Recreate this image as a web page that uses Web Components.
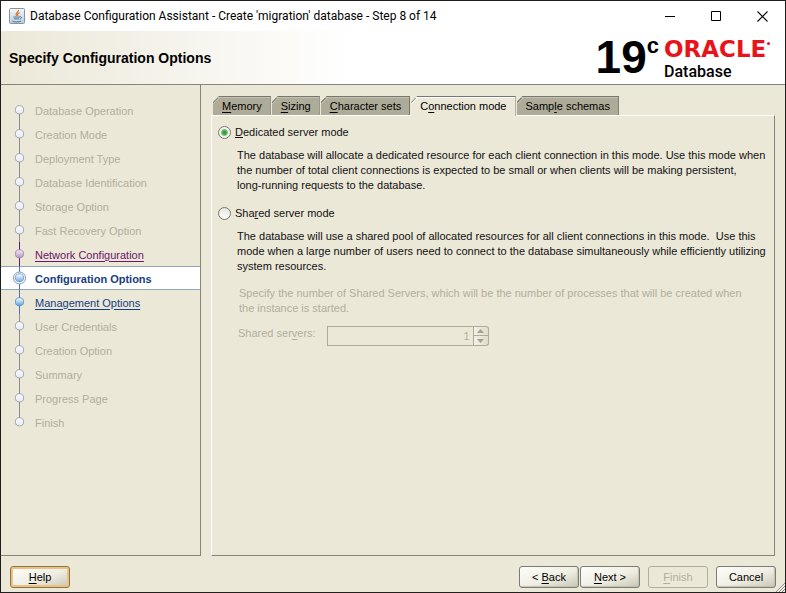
<!DOCTYPE html>
<html lang="en">
<head>
<meta charset="utf-8">
<title>Database Configuration Assistant</title>
<style>
  html, body { height: 100%; margin: 0; }
  body { font: 11px/15px "Liberation Sans", Arial, sans-serif; color: #111; background: #ebe8d8; }
</style>
</head>
<body>
<dbca-window></dbca-window>

<script>
const define = (name, html, setup) => {
  const template = document.createElement('template');
  template.innerHTML = html;
  customElements.define(name, class extends HTMLElement {
    constructor() {
      super();
      this.attachShadow({ mode: 'open' }).append(template.content.cloneNode(true));
    }
    connectedCallback() { if (setup) setup(this, this.shadowRoot); }
  });
};

define('title-bar', `
<style>
  :host { display: flex; align-items: center; height: 30px; padding-left: 8px; background: #fff; color: #000;
          font: 12px/16px Roboto, "Noto Sans", sans-serif; }
  .title { flex: 1; padding-left: 5px; white-space: nowrap; overflow: hidden; }
  button { width: 46px; height: 30px; padding: 0; border: 0; background: none; display: grid; place-items: center; }
  svg { display: block; }
</style>
<svg width="16" height="16" viewBox="0 0 16 16" aria-hidden="true">
  <defs><linearGradient id="j" x2="0" y2="1"><stop stop-color="#f5f8fa"/><stop offset="1" stop-color="#b9cbd8"/></linearGradient></defs>
  <rect x=".5" y=".5" width="15" height="15" rx="1" fill="url(#j)" stroke="#8295a3"/>
  <path d="M9.5 2C10 4 5.5 5 7.6 8M10.5 4.6C8.6 5.4 8 6.300 9 8" fill="none" stroke="#e0762b" stroke-width="1.200"/>
  <path d="M4.500 9h6.500M5 10.800h5M10.800 8.800c2.500-.5 2 1.800 0 2.400M3.500 13.200c2 .9 6.500.9 8.500 0" fill="none" stroke="#54789a"/>
</svg>
<div class="title"><slot></slot></div>
<button aria-label="Minimize"><svg width="11" height="11"><path d="M0 5.500h10" stroke="#000"/></svg></button>
<button aria-label="Maximize"><svg width="11" height="11"><path d="M.5.5h9v9h-9z" fill="none" stroke="#000"/></svg></button>
<button aria-label="Close"><svg width="11" height="11"><path d="M.5.5l10 10M10.500.5l-10 10" stroke="#000" stroke-width="1.100"/></svg></button>`);

define('page-banner', `
<style>
  :host { display: flex; align-items: center; justify-content: space-between; height: 53px; padding: 0 11px 0 8px;
          border-bottom: 1px solid #85847d; background: linear-gradient(90deg, #ebe8d8, #fff 45%); color: #000; }
  h1 { margin: 0; font: bold 14px/18px "Liberation Sans", Arial, sans-serif; }
  .brand { display: grid; grid-template-columns: auto auto 110px; align-items: start; }
  .ver { font: bold 46px/53px "Liberation Sans", Arial, sans-serif; }
  .sup { font: bold 22px/22px "Liberation Sans", Arial, sans-serif; padding: 4px 5px 0 0; }
  .name { display: grid; padding-top: 4px; }
  .oracle { display: flex; align-items: center; font: bold 23px/28px "DejaVu Sans", sans-serif; color: #e8141b; white-space: nowrap; }
  .oracle::after { content: ""; width: 3px; height: 3px; margin: 0 0 12px 1px; border-radius: 50%; background: #e8141b; }
  .product { font: 500 16px/18px Roboto, sans-serif; }
</style>
<h1><slot></slot></h1>
<div class="brand"><span class="ver">19</span><span class="sup">c</span>
  <span class="name"><span class="oracle">ORACLE</span><span class="product">Database</span></span></div>`);

define('wizard-step', `
<style>
  :host { display: flex; align-items: center; height: 24px; box-sizing: border-box; padding-right: 8px; color: #b1af9c;
          --line: #8d8d92; --edge: #8f96a3; --fill: #f6f8fc; --low: #e6ebf3; }
  :host([state=visited]) { color: #6b1568; --line: #6b1568; --edge: #9d84a4; --fill: #eadcf0; --low: #b58fc0; }
  :host([state=ready]) { color: #173d82; --line: #4a76b8; --edge: #6288b8; --fill: #e1f0ff; --low: #559ae0; }
  :host([state=current]) { color: #173d82; font-weight: bold; background: #fff; border: solid #91a5bf; border-width: 1px 0;
          --line: #4a76b8; --edge: #7793b4; --fill: #e6f3ff; --low: #67a8e6; }
  .mark { width: 34px; height: 24px; flex: none; }
  .label { padding-top: 2px; white-space: nowrap; }
  a { color: inherit; text-underline-offset: 2px; }
  .ring, :host([pos=first]) .up, :host([pos=last]) .down { display: none; }
  :host([state=current]) .ring { display: block; }
</style>
<svg class="mark" viewBox="0 0 34 24" aria-hidden="true">
  <defs><linearGradient id="g" x2="0" y2="1"><stop offset=".2" stop-color="var(--fill)"/><stop offset="1" stop-color="var(--low)"/></linearGradient></defs>
  <path class="up" d="M18.500 0v12" stroke="var(--line)"/>
  <path class="down" d="M18.500 12v12" stroke="var(--line)"/>
  <circle class="ring" cx="18.500" cy="12" r="6" fill="#fff" stroke="#7f9cbb"/>
  <circle cx="18.500" cy="11.800" r="4.100" fill="url(#g)" stroke="var(--edge)" stroke-width=".8"/>
</svg>
<span class="label"></span>`, (host, root) => {
  const state = host.getAttribute('state');
  const linked = state === 'visited' || state === 'ready';
  root.querySelector('.label').innerHTML = linked ? '<a href="#"><slot></slot></a>' : '<slot></slot>';
});

define('wizard-nav', `
<style>
  :host { display: block; width: 199px; flex: none; padding-top: 13px; border: solid #85847d; border-width: 0 1px 1px 0; }
</style><slot></slot>`);

define('tab-item', `
<style>
  :host { display: block; --fill: #aeac98; --gloss: #c3c1af; }
  :host([selected]) { --fill: #ebe8d8; --gloss: #fff; margin-bottom: -1px; }
  button { display: block; box-sizing: border-box; width: 100%; height: 19px; padding: 1px 8px 0 9px;
           border: solid #77766f; border-width: 1px 1px 0 0; color: #000; font: inherit; white-space: nowrap;
           clip-path: polygon(0 6px, 6px 0, 100% 0, 100% 100%, 0 100%);
           background: linear-gradient(135deg, #77766f 4px, var(--gloss) 5px, var(--fill) 6px);
           box-shadow: inset 0 1px var(--gloss); }
  :host([selected]) button { height: 20px; padding-bottom: 1px; }
  ::slotted(u) { text-underline-offset: 2px; }
</style>
<button role="tab"><slot></slot></button>`, (host, root) => {
  root.querySelector('button').setAttribute('aria-selected', host.hasAttribute('selected'));
});

define('tab-panel', `
<style>
  :host { display: flex; flex-direction: column; flex: 1; min-width: 0; }
  .tabs { display: flex; align-items: flex-start; gap: 1px; padding-left: 2px; position: relative; }
  .body { flex: 1; padding: 8px 8px 0 6px; border: 1px solid #85847d; border-top-color: #fff; border-left-color: #fff; }
</style>
<div class="tabs" role="tablist"><slot name="tab"></slot></div>
<div class="body" role="tabpanel"><slot></slot></div>`);

define('radio-option', `
<style>
  :host { display: block; margin-bottom: 12px; }
  label { display: flex; align-items: center; gap: 4px; height: 17px; }
  input { appearance: none; box-sizing: border-box; width: 13px; height: 13px; margin: 0; border: 1px solid #77776f; border-radius: 50%;
          background: linear-gradient(#e6e5dc, #fff); }
  input:checked { background: radial-gradient(circle, #2f9c35 1px, #7cc27c 3px, #f6f6f0 4px); }
  .text { padding: 7px 0 0 19px; }
  ::slotted(u) { text-underline-offset: 2px; }
</style>
<label><input type="radio"><span><slot name="label"></slot></span></label>
<div class="text"><slot></slot></div>`, (host, root) => {
  root.querySelector('input').checked = host.hasAttribute('checked');
});

define('server-count', `
<style>
  :host { display: block; padding-top: 12px; color: #b1af9c; }
  p { margin: 0 0 10px; padding: 0 8px 0 2px; }
  .row { display: flex; align-items: flex-start; gap: 11px; padding-left: 1px; }
  u { text-underline-offset: 2px; }
  .spin { display: flex; width: 162px; height: 20px; }
  input { flex: 1; min-width: 0; box-sizing: border-box; margin: 0; padding: 1px 3px 0; border: 1px solid #aeac98; background: #ebe8d8;
          color: #b1af9c; font: inherit; text-align: right; appearance: textfield; }
  input::-webkit-inner-spin-button { appearance: none; }
  .arrows { display: grid; width: 15px; grid-template-rows: 1fr 1fr; }
  button { display: grid; place-items: center; padding: 0; border: 1px solid #aeac98; border-left: 0; background: linear-gradient(90deg, #f3f1e6, #e0ddcc); }
  button:first-child { border-radius: 0 3px 0 0; }
  button:last-child { border-top: 0; border-radius: 0 0 3px 0; }
  svg { display: block; }
</style>
<p><slot></slot></p>
<div class="row"><label for="n">Shared ser<u>v</u>ers:</label>
  <div class="spin"><input id="n" type="number" value="1" disabled>
    <div class="arrows">
      <button disabled aria-label="Increase"><svg width="7" height="4"><path d="M3.500 0L7 4H0z" fill="#a3a18f"/></svg></button>
      <button disabled aria-label="Decrease"><svg width="7" height="4"><path d="M3.500 4L7 0H0z" fill="#a3a18f"/></svg></button>
    </div></div></div>`);

define('push-button', `
<style>
  :host { display: block; }
  button { display: block; width: 60px; height: 22px; box-sizing: border-box; padding: 2px 0 0; border: 1px solid #7b7b78; border-radius: 3px;
           color: #000; font: inherit; white-space: nowrap; background: linear-gradient(160deg, #fdfdfa, #f0eee3 55%, #c9c6b4);
           box-shadow: inset -1px -1px 1px #c4c1b0; }
  :host([focused]) button { border-color: #94713e; box-shadow: inset 0 0 0 2px #e5c488; }
  button:disabled { color: #b1af9c; border-color: #b1af9c; background: none; box-shadow: none; }
  ::slotted(u) { text-underline-offset: 2px; }
</style>
<button><slot></slot></button>`, (host, root) => {
  root.querySelector('button').disabled = host.hasAttribute('disabled');
});

define('button-bar', `
<style>
  :host { position: relative; display: flex; align-items: center; height: 36px; padding: 5px 9px 0; box-sizing: border-box; }
  .right { margin-left: auto; display: flex; gap: 8px; }
  .pair { display: flex; gap: 1px; }
  .grip { position: absolute; right: 0; bottom: 0; }
</style>
<slot name="start"></slot>
<div class="right"><div class="pair"><slot name="pair"></slot></div><slot></slot></div>
<svg class="grip" width="10" height="10" aria-hidden="true"><path d="M1 10l9-9M4 10l6-6M7 10l3-3" stroke="#8b8a80"/><path d="M2 10l8-8M5 10l5-5M8 10l2-2" stroke="#fff" stroke-width=".7"/></svg>`);

define('dbca-window', `
<style>
  :host { display: flex; flex-direction: column; box-sizing: border-box; min-height: 100vh; border: 1px solid #211f1e; background: #ebe8d8; }
  .main { display: flex; flex: 1; gap: 10px; }
  tab-panel { margin: 11px 10px 0 0; }
  .together { white-space: nowrap; }
</style>
<title-bar>Database Configuration Assistant - Create 'migration' database - Step 8 of 14</title-bar>
<page-banner>Specify Configuration Options</page-banner>
<div class="main">
  <wizard-nav>
    <wizard-step pos="first">Database Operation</wizard-step>
    <wizard-step>Creation Mode</wizard-step>
    <wizard-step>Deployment Type</wizard-step>
    <wizard-step>Database Identification</wizard-step>
    <wizard-step>Storage Option</wizard-step>
    <wizard-step>Fast Recovery Option</wizard-step>
    <wizard-step state="visited">Network Configuration</wizard-step>
    <wizard-step state="current">Configuration Options</wizard-step>
    <wizard-step state="ready">Management Options</wizard-step>
    <wizard-step>User Credentials</wizard-step>
    <wizard-step>Creation Option</wizard-step>
    <wizard-step>Summary</wizard-step>
    <wizard-step>Progress Page</wizard-step>
    <wizard-step pos="last">Finish</wizard-step>
  </wizard-nav>
  <tab-panel>
    <tab-item slot="tab"><u>M</u>emory</tab-item>
    <tab-item slot="tab"><u>S</u>izing</tab-item>
    <tab-item slot="tab"><u>C</u>haracter sets</tab-item>
    <tab-item slot="tab" selected>C<u>o</u>nnection mode</tab-item>
    <tab-item slot="tab">Samp<u>l</u>e schemas</tab-item>
    <radio-option checked>
      <span slot="label"><u>D</u>edicated server mode</span>
      The database will allocate a dedicated resource for each client connection in this mode. Use this mode when the number of total client connections is expected to be small or when clients will be making persistent, <span class="together">long-running</span> requests to the database.
    </radio-option>
    <radio-option>
      <span slot="label">Sha<u>r</u>ed server mode</span>
      The database will use a shared pool of allocated resources for all client connections in this mode.&nbsp; Use this mode when a large number of users need to connect to the database simultaneously while efficiently utilizing system resources.
      <server-count>Specify the number of Shared Servers, which will be the number of processes that will be created when the instance is started.</server-count>
    </radio-option>
  </tab-panel>
</div>
<button-bar>
  <push-button slot="start" focused><u>H</u>elp</push-button>
  <push-button slot="pair">&lt; <u>B</u>ack</push-button>
  <push-button slot="pair"><u>N</u>ext &gt;</push-button>
  <push-button disabled><u>F</u>inish</push-button>
  <push-button>Cancel</push-button>
</button-bar>`);
</script>
</body>
</html>
